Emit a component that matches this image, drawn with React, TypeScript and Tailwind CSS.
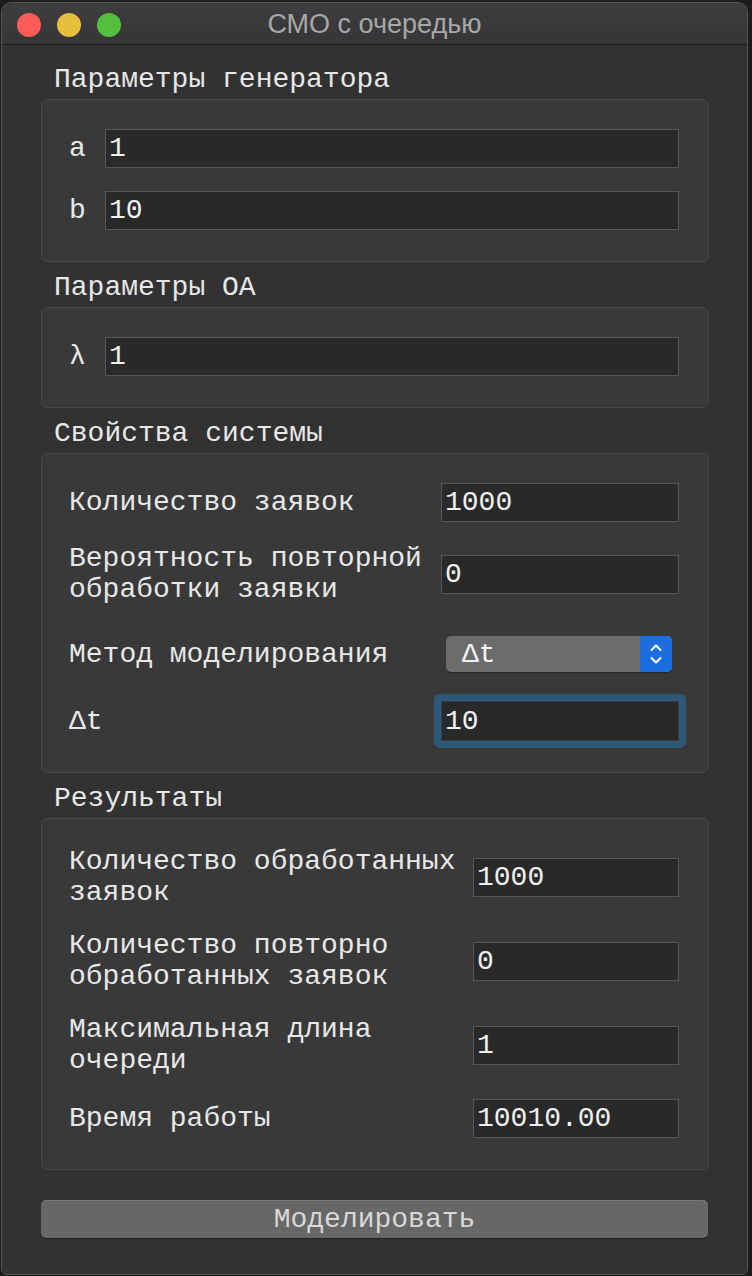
import React from "react";

const mono = "font-['Liberation_Mono','DejaVu_Sans_Mono',monospace]";

function Field({ value, w }: { value: string; w: string }) {
  return (
    <input
      readOnly
      value={value}
      className={`${w} h-[39px] bg-[#292929] border border-[#565656] pl-[3px] text-[28px] leading-[31px] text-[#f0f0f0] outline-none ${mono}`}
    />
  );
}

function GroupLabel({ children }: { children: React.ReactNode }) {
  return (
    <div className={`ml-[13px] mt-[10px] mb-[4px] h-[31px] text-[28px] leading-[31px] text-[#e8e8e8] whitespace-pre ${mono}`}>
      {children}
    </div>
  );
}

function Group({ children, className }: { children: React.ReactNode; className: string }) {
  return (
    <div className={`w-[668px] rounded-[6px] border border-[#474747] bg-[#393939] pl-[27px] pr-[29px] flex flex-col ${className}`}>
      {children}
    </div>
  );
}

function Row({ label, children, className = "" }: { label: React.ReactNode; children: React.ReactNode; className?: string }) {
  return (
    <div className={`flex items-center ${className}`}>
      <div className={`flex-1 text-[28px] leading-[31px] text-[#e8e8e8] whitespace-pre ${mono}`}>{label}</div>
      {children}
    </div>
  );
}

function Chevrons() {
  return (
    <svg width="16" height="26" viewBox="0 0 16 26" fill="none" stroke="white" strokeWidth="2" strokeLinecap="round" strokeLinejoin="round">
      <path d="M3.5 9 L8 4.5 L12.5 9" />
      <path d="M3.5 17 L8 21.5 L12.5 17" />
    </svg>
  );
}

export default function App() {
  return (
    <div className="w-[752px] h-[1276px] bg-[#1c1c1c] pt-[2px] pl-[1px]">
      <div className="w-[747px] h-[1273px] rounded-t-[10px] rounded-b-[6px] border border-[#555] bg-[#323232] overflow-hidden flex flex-col">
        {/* title bar */}
        <div className="relative h-[42px] shrink-0 bg-gradient-to-b from-[#3e3e40] to-[#363638] border-b border-[#1b1b1b] flex items-center">
          <div className="flex items-center gap-[16px] pl-[15px] pt-[2px]">
            <span className="w-[24px] h-[24px] rounded-full bg-[#fd5c57]" />
            <span className="w-[24px] h-[24px] rounded-full bg-[#e6bf3d]" />
            <span className="w-[24px] h-[24px] rounded-full bg-[#55bf3e]" />
          </div>
          <div className="absolute inset-0 flex items-center justify-center pt-[2px] text-[27px] text-[#a8a8a8] font-['Liberation_Sans',Arial,sans-serif]">
            СМО с очередью
          </div>
        </div>

        <div className="flex flex-col pl-[39px] pt-[9px]">
          <GroupLabel>Параметры генератора</GroupLabel>
          <Group className="pt-[29px] pb-[31px] gap-[23px]">
            <Row label="a">
              <Field value="1" w="w-[574px]" />
            </Row>
            <Row label="b">
              <Field value="10" w="w-[574px]" />
            </Row>
          </Group>

          <GroupLabel>Параметры ОА</GroupLabel>
          <Group className="pt-[29px] pb-[31px]">
            <Row label="λ">
              <Field value="1" w="w-[574px]" />
            </Row>
          </Group>

          <GroupLabel>Свойства системы</GroupLabel>
          <Group className="pt-[29px] pb-[31px]">
            <Row label="Количество заявок">
              <Field value="1000" w="w-[238px]" />
            </Row>
            <Row label={"Вероятность повторной\nобработки заявки"} className="mt-[21px]">
              <Field value="0" w="w-[238px]" />
            </Row>
            <Row label="Метод моделирования" className="mt-[31px]">
              <div className="w-[238px] pl-[5px] pr-[7px]">
                <div className="h-[36px] rounded-[5px] bg-[#6c6c6c] shadow-[0_1px_1px_rgba(0,0,0,0.35)] flex overflow-hidden">
                  <div className={`flex-1 pl-[16px] flex items-center text-[28px] leading-[31px] text-[#f4f4f4] ${mono}`}>Δt</div>
                  <div className="w-[32px] bg-[#1b6ee2] flex items-center justify-center">
                    <Chevrons />
                  </div>
                </div>
              </div>
            </Row>
            <Row label="Δt" className="mt-[29px]">
              <div className="-my-[7px] -mx-[7px] p-[7px] rounded-[6px] bg-[#2e5877]">
                <input
                  readOnly
                  value="10"
                  className={`block w-[238px] h-[40px] bg-[#292929] border border-[#3a3f44] pl-[3px] text-[28px] leading-[31px] text-[#f0f0f0] outline-none ${mono}`}
                />
              </div>
            </Row>
          </Group>

          <GroupLabel>Результаты</GroupLabel>
          <Group className="pt-[27px] pb-[31px]">
            <Row label={"Количество обработанных\nзаявок"}>
              <Field value="1000" w="w-[206px]" />
            </Row>
            <Row label={"Количество повторно\nобработанных заявок"} className="mt-[22px]">
              <Field value="0" w="w-[206px]" />
            </Row>
            <Row label={"Максимальная длина\nочереди"} className="mt-[22px]">
              <Field value="1" w="w-[206px]" />
            </Row>
            <Row label="Время работы" className="mt-[23px]">
              <Field value="10010.00" w="w-[206px]" />
            </Row>
          </Group>

          <button
            className={`mt-[30px] w-[667px] h-[38px] rounded-[5px] bg-[#676767] border-t border-[#7a7a7a] shadow-[0_1px_1px_rgba(0,0,0,0.4)] text-[28px] leading-[31px] text-[#d8d8d8] ${mono}`}
          >
            Моделировать
          </button>
        </div>
      </div>
    </div>
  );
}
